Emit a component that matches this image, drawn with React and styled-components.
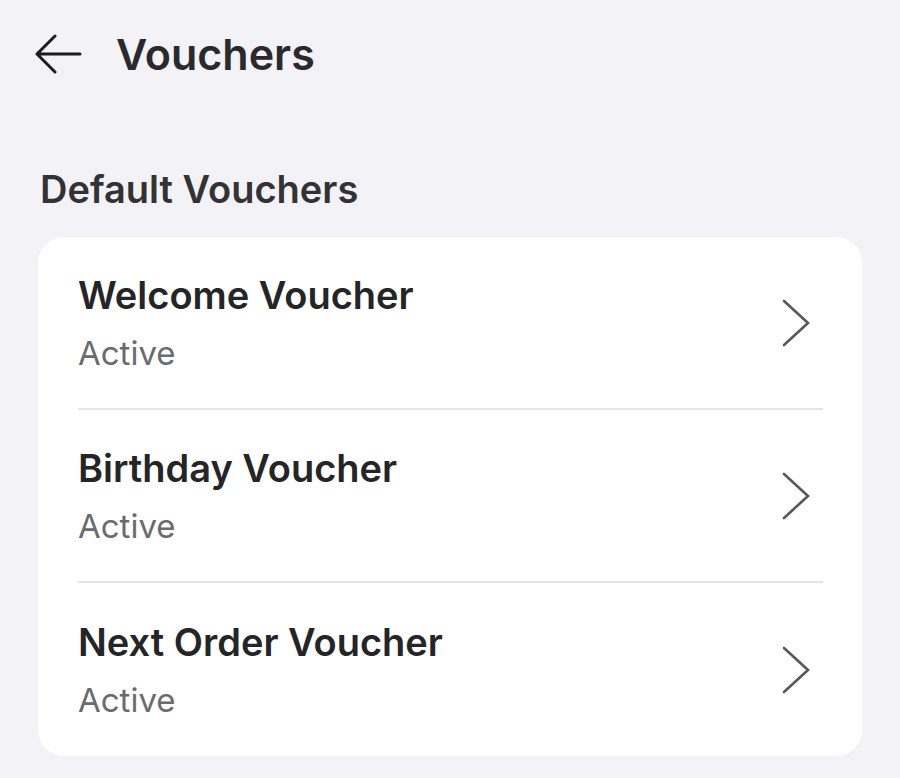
import React from "react";
import styled, { createGlobalStyle } from "styled-components";

const Global = createGlobalStyle`
  html, body { margin: 0; padding: 0; background: #f2f2f7; }
  body { font-family: Inter, "Noto Sans", "Liberation Sans", sans-serif; -webkit-font-smoothing: antialiased; }
`;

const Page = styled.div`
  min-height: 778px;
  background: #f2f2f7;
  padding: 0 38px;
  box-sizing: border-box;
`;

const Header = styled.header`
  display: flex;
  align-items: center;
  height: 52px;
  padding-top: 28px;
  margin-left: -4px;
  gap: 34px;
`;

const BackButton = styled.button`
  display: flex;
  align-items: center;
  justify-content: center;
  padding: 0;
  border: 0;
  background: transparent;
  color: #1c1c1e;
  width: 48px;
  height: 40px;
  cursor: pointer;
`;

const Title = styled.h1`
  margin: 0;
  font-size: 43px;
  line-height: 52px;
  font-weight: 600;
  color: #2a2a2c;
`;

const SectionTitle = styled.h2`
  margin: 86px 0 25px 2px;
  font-size: 38px;
  line-height: 46px;
  font-weight: 600;
  color: #333336;
`;

const Card = styled.div`
  background: #ffffff;
  border-radius: 26px;
  padding: 0 39px 0 40px;
`;

const Row = styled.div`
  display: flex;
  align-items: center;
  justify-content: space-between;
  height: 173px;
  box-sizing: border-box;
  border-bottom: ${(p) => (p.$last ? "none" : "2px solid #e4e4e7")};
  cursor: pointer;
`;

const TextBlock = styled.div`
  display: flex;
  flex-direction: column;
  gap: 15px;
`;

const RowTitle = styled.div`
  font-size: 38px;
  line-height: 46px;
  font-weight: 600;
  color: #252527;
`;

const RowStatus = styled.div`
  font-size: 33px;
  line-height: 40px;
  font-weight: 400;
  color: #6b6b6e;
`;

const Chevron = styled.svg`
  width: 28px;
  height: 48px;
  margin-right: 13px;
  color: #58585a;
  flex-shrink: 0;
`;

const vouchers = [
  { name: "Welcome Voucher", status: "Active" },
  { name: "Birthday Voucher", status: "Active" },
  { name: "Next Order Voucher", status: "Active" },
];

export default function App() {
  return (
    <>
      <Global />
      <Page>
        <Header>
          <BackButton aria-label="Back">
            <svg width="48" height="40" viewBox="0 0 48 40" fill="none">
              <path
                d="M3 20 H46 M21 2 L3 20 L21 38"
                stroke="currentColor"
                strokeWidth="3"
                strokeLinecap="round"
                strokeLinejoin="round"
              />
            </svg>
          </BackButton>
          <Title>Vouchers</Title>
        </Header>
        <SectionTitle>Default Vouchers</SectionTitle>
        <Card>
          {vouchers.map((v, i) => (
            <Row key={v.name} $last={i === vouchers.length - 1}>
              <TextBlock>
                <RowTitle>{v.name}</RowTitle>
                <RowStatus>{v.status}</RowStatus>
              </TextBlock>
              <Chevron viewBox="0 0 28 48" fill="none">
                <path
                  d="M2 2 L26 24 L2 46"
                  stroke="currentColor"
                  strokeWidth="2.6"
                  strokeLinecap="round"
                  strokeLinejoin="miter"
                />
              </Chevron>
            </Row>
          ))}
        </Card>
      </Page>
    </>
  );
}
